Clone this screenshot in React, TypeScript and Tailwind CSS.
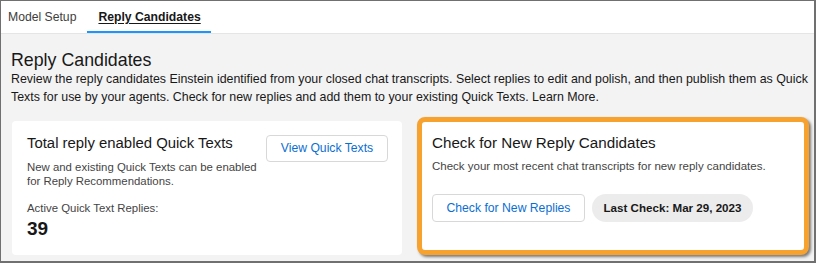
export default function App() {
  return (
    <div
      className="w-[816px] h-[263px] overflow-hidden bg-[#f3f3f3] border-t border-l border-r-2 border-b-2 border-[#707070] flex flex-col text-[#181818]"
      style={{ fontFamily: '"Liberation Sans", Arial, sans-serif' }}
    >
      <div className="h-[33px] bg-white border-b border-[#e5e5e5] flex items-stretch pl-[7px] shrink-0">
        <div className="flex items-center pr-[11px] text-[12.2px] text-[#3e3e3c]">Model Setup</div>
        <div className="relative flex items-center w-[124px] pl-[11px] text-[12.2px] font-bold underline underline-offset-2 text-[#181818]">
          Reply Candidates
          <div className="absolute left-0 right-0 bottom-[0px] h-[2px] bg-[#1b96ff]" />
        </div>
      </div>
      <div className="pl-[10px] pr-[3px] pt-[16px]">
        <h1 className="text-[17.8px] leading-[20px]">Reply Candidates</h1>
        <p className="text-[12.4px] leading-[18px] text-[#181818]">
          Review the reply candidates Einstein identified from your closed chat transcripts. Select replies to edit and polish, and then publish them as Quick Texts for use by your agents. Check for new replies and add them to your existing Quick Texts. Learn More.
        </p>
      </div>
      <div className="flex items-start gap-[15px] pl-[11px] mt-[11px]">
        <div className="w-[390px] h-[134px] bg-white rounded-[4px] mt-[4px] flex pl-[15px] pr-[14px] pt-[12px]">
          <div className="flex-1">
            <div className="text-[14.9px] leading-[20px]">Total reply enabled Quick Texts</div>
            <div className="text-[11.4px] leading-[14px] text-[#444444] mt-[7px]">
              New and existing Quick Texts can be enabled
              <br />
              for Reply Recommendations.
            </div>
            <div className="text-[11.4px] leading-[14px] text-[#444444] mt-[13px]">Active Quick Text Replies:</div>
            <div className="text-[19px] leading-[24px] font-bold mt-[2px]">39</div>
          </div>
          <div className="pt-[2px]">
            <button className="w-[122px] h-[27px] border border-[#d8d8d8] rounded-[4px] text-[12.2px] text-[#0b6fd1] bg-white">
              View Quick Texts
            </button>
          </div>
        </div>
        <div className="w-[392px] h-[138px] bg-white rounded-[8px] border-[5px] border-[#f7a22f] shadow-[2px_2px_3px_rgba(0,0,0,0.5)] px-[10px] pt-[11px]">
          <div className="text-[15.2px] leading-[20px]">Check for New Reply Candidates</div>
          <div className="text-[11.5px] leading-[15px] text-[#444444] mt-[6px]">
            Check your most recent chat transcripts for new reply candidates.
          </div>
          <div className="flex gap-[7px] mt-[20px] items-center">
            <button className="w-[153px] h-[28px] border border-[#d8d8d8] rounded-[4px] text-[12.2px] text-[#0b6fd1] bg-white">
              Check for New Replies
            </button>
            <div className="w-[161px] h-[28px] rounded-full bg-[#ececec] flex items-center justify-center text-[11.6px] font-bold">
              Last Check: Mar 29, 2023
            </div>
          </div>
        </div>
      </div>
    </div>
  );
}
